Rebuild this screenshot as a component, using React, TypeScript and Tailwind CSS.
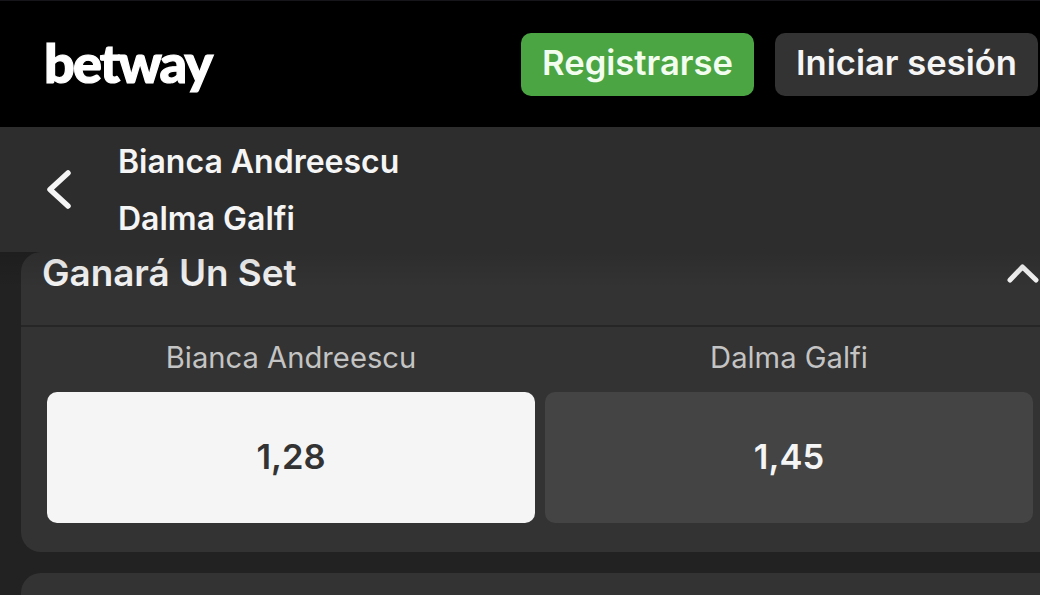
function Odds({ name, price, selected }: { name: string; price: string; selected?: boolean }) {
    return (
        <div className="flex flex-col items-center">
            <div className="h-[65px] pt-[13px] text-[29.2px] leading-[36px] text-[#c4c4c4]">{name}</div>
            <button
                className={`flex h-[131px] w-full items-center justify-center rounded-[10px] pb-[2px] text-[34.5px] font-semibold ${
                    selected ? "bg-[#f5f5f5] text-[#333333]" : "bg-[#444444] text-[#f5f5f5]"
                }`}
            >
                {price}
            </button>
        </div>
    );
}

export default function App() {
    return (
        <div className="h-[595px] w-[1040px] overflow-hidden bg-[#222222] font-['Inter',sans-serif]">
            <header className="flex h-[127px] items-center justify-between border-t border-[#15151a] bg-black pl-[44px] pr-[2px]">
                <span className="pb-[3px] font-['Lato',sans-serif] text-[54px] font-black leading-none tracking-[-1.9px] text-white [-webkit-text-stroke:1.2px_white]">
                    betway
                </span>
                <div className="flex gap-[21px]">
                    <button className="flex h-[63px] w-[233px] items-center justify-center rounded-[10px] bg-[#4ba543] pb-[2px] text-[34.6px] font-semibold text-[#f2fdf0]">
                        Registrarse
                    </button>
                    <button className="flex h-[63px] w-[263px] items-center justify-center rounded-[10px] bg-[#333333] pb-[2px] text-[34.6px] font-semibold text-[#f5f5f5]">
                        Iniciar sesión
                    </button>
                </div>
            </header>

            <div className="relative flex h-[125px] items-center bg-[#2d2d2d]">
                <div className="flex w-[118px] pl-[47px] text-[#f5f5f5]">
                    <svg width="24" height="39" viewBox="0 0 24 39" fill="none" stroke="currentColor" strokeWidth="5.5" strokeLinecap="round" strokeLinejoin="round">
                        <path d="M21 3 3 19.5 21 36" />
                    </svg>
                </div>
                <div className="flex flex-col gap-[21px] pt-[2px] text-[32px] font-semibold leading-[36px] text-[#f5f5f5]">
                    <span>Bianca Andreescu</span>
                    <span>Dalma Galfi</span>
                </div>
                <div className="absolute left-0 top-full z-10 h-[36px] w-full bg-linear-to-b from-black/12 to-transparent" />
            </div>

            <main className="flex flex-col gap-[21px] pl-[21px]">
                <section className="h-[300px] w-[1040px] rounded-l-[20px] bg-[#333333]">
                    <div className="flex h-[75px] items-start justify-between border-b-2 border-[#262626] pl-[21px] pr-[21px] text-[#f5f5f5]">
                        <h2 className="text-[36.8px] font-semibold leading-[42px]">Ganará Un Set</h2>
                        <svg width="33" height="20" viewBox="0 0 33 20" fill="none" stroke="currentColor" strokeWidth="5" strokeLinecap="round" strokeLinejoin="round" className="mt-[11px]">
                            <path d="M3 17 15.5 4 29 17" />
                        </svg>
                    </div>
                    <div className="ml-[26px] grid w-[986px] grid-cols-2 gap-[10px]">
                        <Odds name="Bianca Andreescu" price="1,28" selected />
                        <Odds name="Dalma Galfi" price="1,45" />
                    </div>
                </section>
                <section className="h-[80px] w-[1040px] rounded-l-[20px] bg-[#333333]" />
            </main>
        </div>
    );
}
